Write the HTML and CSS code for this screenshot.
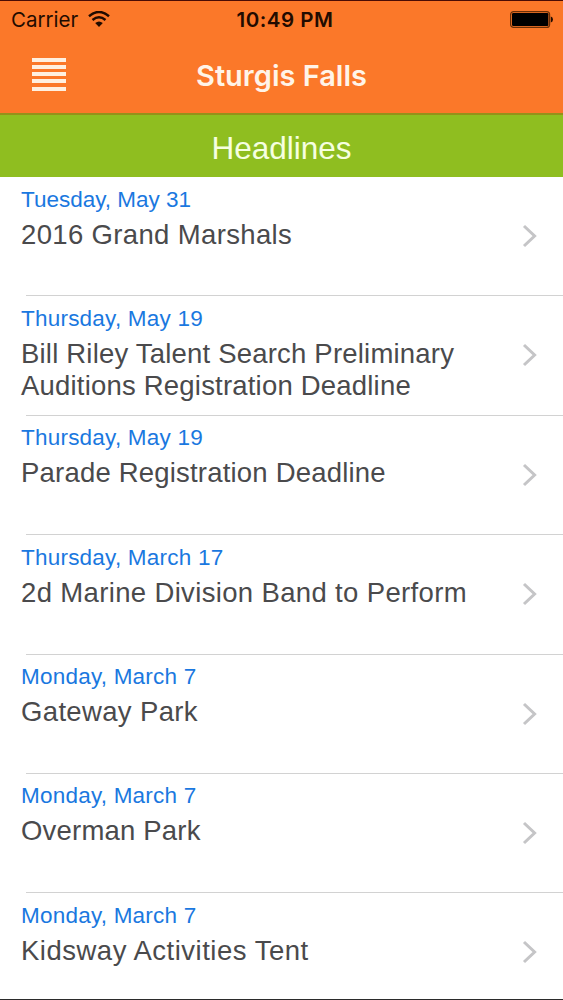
FILE: index.html
```html
<!DOCTYPE html>
<html lang="en">
<head>
<meta charset="UTF-8">
<meta name="viewport" content="width=device-width, initial-scale=1.0">
<title>Sturgis Falls</title>
<link rel="stylesheet" href="styles.css">
</head>
<body>

<div class="screen">
    <header class="header">
        <div class="status-bar">
            <div class="carrier">
                <span>Carrier</span>
                <svg class="wifi" width="22" height="17" viewBox="0 0 22 17">
                    <path d="M1 5.2Q11-3.2 21 5.2" fill="none" stroke="#210b00" stroke-width="2.5"/>
                    <path d="M4.5 9Q11 3.6 17.5 9" fill="none" stroke="#210b00" stroke-width="2.5"/>
                    <path d="M7.2 12Q11 8.8 14.8 12L11 16Z" fill="#210b00"/>
                </svg>
            </div>
            <span class="time">10:49 PM</span>
            <svg class="battery" width="43" height="17" viewBox="0 0 43 17">
                <rect x="0.6" y="0.6" width="39" height="15.8" rx="3" fill="none" stroke="#6b3008" stroke-width="1.2"/>
                <rect x="2" y="2" width="36.4" height="13" rx="1.2" fill="#000"/>
                <path d="M40.8 5.6Q43 6.2 43 8.6T40.8 11.6Z" fill="#210b00"/>
            </svg>
        </div>
        <div class="nav-bar">
            <button class="menu" aria-label="Menu">
                <span></span>
                <span></span>
                <span></span>
                <span></span>
                <span></span>
            </button>
            <h1>Sturgis Falls</h1>
        </div>
    </header>

    <h2 class="section-title">Headlines</h2>

    <ul class="headlines">
        <li>
            <div class="text">
                <p class="date tight">Tuesday, May 31</p>
                <p class="title">2016 Grand Marshals</p>
            </div>
            <svg class="chevron" width="16" height="24" viewBox="0 0 16 24"><path d="M2 2L12.6 12L2 22" /></svg>
        </li>
        <li>
            <div class="text">
                <p class="date">Thursday, May 19</p>
                <p class="title tight">Bill Riley Talent Search Preliminary<br>Auditions Registration Deadline</p>
            </div>
            <svg class="chevron" width="16" height="24" viewBox="0 0 16 24"><path d="M2 2L12.6 12L2 22" /></svg>
        </li>
        <li>
            <div class="text">
                <p class="date">Thursday, May 19</p>
                <p class="title tight">Parade Registration Deadline</p>
            </div>
            <svg class="chevron" width="16" height="24" viewBox="0 0 16 24"><path d="M2 2L12.6 12L2 22" /></svg>
        </li>
        <li>
            <div class="text">
                <p class="date">Thursday, March 17</p>
                <p class="title">2d Marine Division Band to Perform</p>
            </div>
            <svg class="chevron" width="16" height="24" viewBox="0 0 16 24"><path d="M2 2L12.6 12L2 22" /></svg>
        </li>
        <li>
            <div class="text">
                <p class="date">Monday, March 7</p>
                <p class="title">Gateway Park</p>
            </div>
            <svg class="chevron" width="16" height="24" viewBox="0 0 16 24"><path d="M2 2L12.6 12L2 22" /></svg>
        </li>
        <li>
            <div class="text">
                <p class="date">Monday, March 7</p>
                <p class="title tight">Overman Park</p>
            </div>
            <svg class="chevron" width="16" height="24" viewBox="0 0 16 24"><path d="M2 2L12.6 12L2 22" /></svg>
        </li>
        <li>
            <div class="text">
                <p class="date">Monday, March 7</p>
                <p class="title wide">Kidsway Activities Tent</p>
            </div>
            <svg class="chevron" width="16" height="24" viewBox="0 0 16 24"><path d="M2 2L12.6 12L2 22" /></svg>
        </li>
    </ul>
</div>

</body>
</html>
```
FILE: styles.css
```css
body {
    font-family: "Liberation Sans", Arial, sans-serif;
    background-color: #fff;
    margin: 0;
    padding: 0;
}

h1, h2, p, ul {
    margin: 0;
    padding: 0;
    font-weight: normal;
}

.screen {
    box-sizing: border-box;
    height: 1000px;
    overflow: hidden;
    border-top: 1px solid #4a0c04;
    border-bottom: 1px solid #2b2b2b;
}

.header {
    box-sizing: border-box;
    height: 114px;
    background-color: #fb7829;
    border-bottom: 2px solid #94911a;
}

.status-bar {
    display: grid;
    grid-template-columns: 1fr auto 1fr;
    align-items: center;
    height: 37px;
    padding: 0 10px 0 11px;
    color: #210b00;
    font-family: Inter, sans-serif;
    font-size: 20.5px;
}

.carrier {
    display: flex;
    align-items: center;
    gap: 10px;
}

.time {
    padding-left: 6px;
    font-weight: 600;
    letter-spacing: 0.5px;
}

.battery {
    justify-self: end;
}

.nav-bar {
    display: grid;
    grid-template-columns: 66px 1fr 66px;
    align-items: center;
    height: 75px;
}

.menu {
    display: flex;
    flex-direction: column;
    gap: 3.25px;
    width: 66px;
    padding: 0 0 3px 32px;
    border: none;
    background: none;
}

.menu span {
    width: 34px;
    height: 4px;
    background-color: #fff0e0;
}

h1 {
    color: #fff4e8;
    font-family: Inter, sans-serif;
    font-size: 29px;
    font-weight: 600;
    line-height: 32px;
    text-align: center;
}

.section-title {
    height: 62px;
    background-color: #8fbe20;
    color: #f6ffe0;
    font-size: 31.5px;
    line-height: 66px;
    text-align: center;
}

.headlines {
    list-style: none;
}

.headlines li {
    display: flex;
    justify-content: space-between;
    box-sizing: border-box;
    height: 119.4px;
    padding: 6.5px 25px 0 21px;
    background: linear-gradient(#d2d2d2, #d2d2d2) 26px 100% / 100% 1px no-repeat;
}

.date {
    color: #1a78e0;
    font-size: 22.5px;
    letter-spacing: 0.22px;
    line-height: 32px;
}

.title {
    margin-top: 3px;
    color: #4a4a4c;
    font-size: 27.5px;
    letter-spacing: 0.35px;
    line-height: 32.5px;
    white-space: nowrap;
}

.date.tight {
    letter-spacing: 0;
}

.title.tight {
    letter-spacing: 0.2px;
}

.title.wide {
    letter-spacing: 0.5px;
}

.chevron {
    margin-top: 40.5px;
}

.chevron path {
    fill: none;
    stroke: #c5c5c7;
    stroke-width: 3;
}
```
